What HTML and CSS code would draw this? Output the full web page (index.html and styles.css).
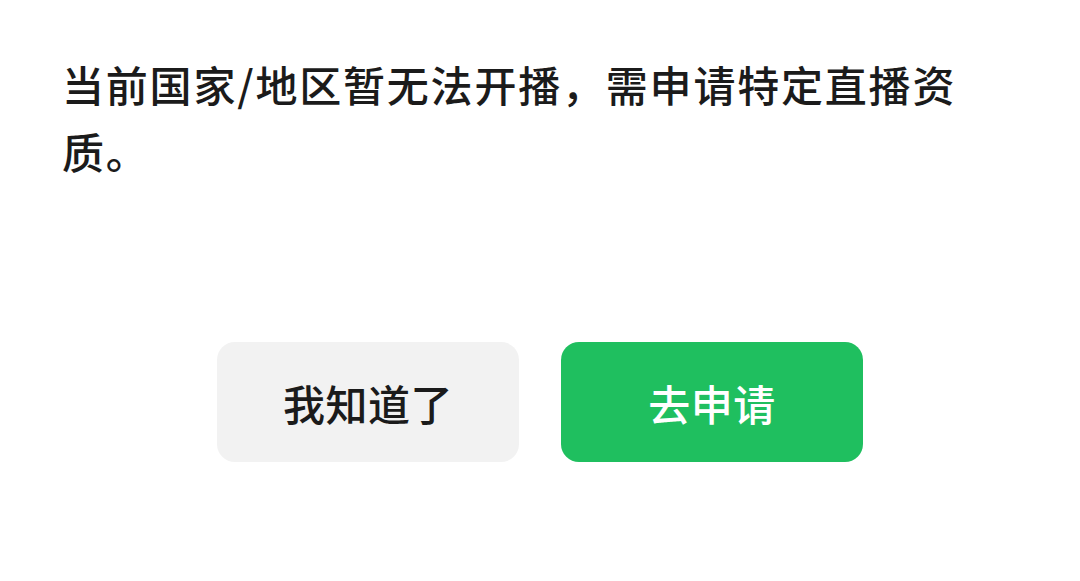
FILE: index.html
```html
<!DOCTYPE html>
<html lang="zh-CN">
<head>
  <meta charset="UTF-8">
  <meta name="viewport" content="width=device-width, initial-scale=1.0">
  <title>直播资质</title>
  <link rel="stylesheet" href="styles.css">
</head>
<body>
  <div class="dialog">
    <p class="message">当前国家/地区暂无法开播，需申请特定直播资质。</p>

    <div class="actions">
      <button type="button" class="btn btn-cancel">我知道了</button>
      <button type="button" class="btn btn-primary">去申请</button>
    </div>
  </div>
</body>
</html>
```

FILE: styles.css
```css
body {
  margin: 0;
  background: #fff;
  font-family: "Noto Sans CJK SC", "Noto Sans", sans-serif;
  color: #1b1b1b;
}
.dialog {
  width: 1080px;
  height: 581px;
  box-sizing: border-box;
  padding: 50px 62px 0;
}
.message {
  margin: 0;
  width: 910px;
  font-size: 42px;
  line-height: 67px;
  letter-spacing: 1.8px;
  font-weight: 500;
}
.actions {
  display: flex;
  justify-content: center;
  gap: 42px;
  margin-top: 158px;
  margin-left: -62px;
  margin-right: -62px;
}
.btn {
  width: 302px;
  height: 120px;
  border: none;
  border-radius: 18px;
  font-family: inherit;
  font-size: 42px;
  font-weight: 500;
  letter-spacing: 0.5px;
  cursor: pointer;
}
.btn-cancel {
  background-color: #f2f2f2;
  color: #1b1b1b;
}
.btn-primary {
  background-color: #1fbf5f;
  color: #fff;
}
```
